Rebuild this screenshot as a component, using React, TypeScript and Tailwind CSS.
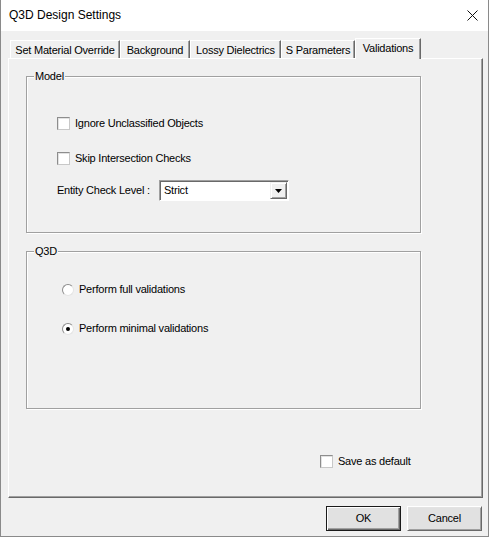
import React from 'react';

const ui = "font-['Liberation_Sans',sans-serif] text-[11px] leading-[13px] tracking-[-0.22px] text-black";

const tabs = [
  { label: 'Set Material Override', width: 'w-[110px]' },
  { label: 'Background', width: 'w-[70px]' },
  { label: 'Lossy Dielectrics', width: 'w-[91px]' },
  { label: 'S Parameters', width: 'w-[74px]' },
  { label: 'Validations', width: 'w-[66px]', active: true },
];

function CheckBox() {
  return (
    <span className="box-border h-[13px] w-[13px] shrink-0 border border-t-[#8d8d8d] border-l-[#8d8d8d] border-r-[#c8c8c8] border-b-[#c8c8c8] bg-white shadow-[inset_1px_1px_0_#e2e2e2]" />
  );
}

function Radio({ checked }: { checked?: boolean }) {
  return (
    <span className="box-border flex h-[12px] w-[12px] shrink-0 items-center justify-center rounded-full border border-t-[#8d8d8d] border-l-[#8d8d8d] border-r-[#e4e4e4] border-b-[#e4e4e4] bg-white">
      {checked && <span className="h-[4px] w-[4px] rounded-full bg-black" />}
    </span>
  );
}

function GroupBox({ title, className, children }: { title: string; className: string; children: React.ReactNode }) {
  return (
    <div className={`relative box-border w-[395px] border border-[#a0a0a0] shadow-[1px_1px_0_#ffffff,inset_1px_1px_0_#ffffff] ${className}`}>
      <span className="absolute left-[7px] top-[-7px] bg-[#f0f0f0] px-[1px]">{title}</span>
      {children}
    </div>
  );
}

export default function App() {
  return (
    <div className={`box-border flex h-[537px] w-[489px] flex-col border-x border-b border-[#8a8a8a] bg-[#f0f0f0] ${ui}`}>
      {/* Title bar */}
      <div className="flex h-[31px] shrink-0 items-center justify-between bg-white pl-[8px] pr-[10px]">
        <span className="font-['Liberation_Sans',sans-serif] text-[12px] tracking-normal text-black">Q3D Design Settings</span>
        <svg width="11" height="11" viewBox="0 0 11 11" className="mt-[-1px]">
          <path d="M0.5 0.5 L10.5 10.5 M10.5 0.5 L0.5 10.5" stroke="#111" strokeWidth="1" />
        </svg>
      </div>

      {/* Tabs */}
      <div className="ml-[9px] mt-[7px] flex h-[20px] items-end">
        {tabs.map((tab) =>
          tab.active ? (
            <div
              key={tab.label}
              className={`relative z-10 -mb-px box-border flex h-[21px] items-start justify-center border-l border-t border-r border-l-white border-t-white border-r-[#696969] bg-[#f0f0f0] pt-[3px] shadow-[inset_-1px_0_0_#a0a0a0] ${tab.width}`}
            >
              {tab.label}
            </div>
          ) : (
            <div
              key={tab.label}
              className={`box-border flex h-[18px] items-start justify-center border-l border-t border-r border-l-white border-t-white border-r-[#696969] pt-[3px] shadow-[inset_-1px_0_0_#a0a0a0] ${tab.width}`}
            >
              {tab.label}
            </div>
          )
        )}
      </div>

      {/* Tab page */}
      <div className="ml-[7px] box-border flex h-[440px] w-[475px] flex-col border border-t-white border-l-white border-r-[#696969] border-b-[#696969] shadow-[inset_-1px_-1px_0_#a0a0a0]">
        <GroupBox title="Model" className="ml-[17px] mt-[17px] h-[157px]">
          <div className="ml-[30px] mt-[40px] flex h-[13px] items-center gap-[5px]">
            <CheckBox />
            <span>Ignore Unclassified Objects</span>
          </div>
          <div className="ml-[30px] mt-[22px] flex h-[13px] items-center gap-[5px]">
            <CheckBox />
            <span>Skip Intersection Checks</span>
          </div>
          <div className="ml-[30px] mt-[15px] flex items-center">
            <span className="w-[102px]">Entity Check Level :</span>
            <div className="box-border flex h-[21px] w-[130px] items-center border border-t-[#a0a0a0] border-l-[#a0a0a0] border-r-white border-b-white bg-white shadow-[inset_1px_1px_0_#696969]">
              <span className="ml-[4px] flex-1">Strict</span>
              <span className="mr-[1px] box-border flex h-[17px] w-[17px] items-center justify-center border border-t-[#f0f0f0] border-l-[#f0f0f0] border-r-[#696969] border-b-[#696969] bg-[#f0f0f0] shadow-[inset_1px_1px_0_#ffffff,inset_-1px_-1px_0_#a0a0a0]">
                <svg width="7" height="4" viewBox="0 0 7 4">
                  <path d="M0 0 H7 L3.5 4 Z" fill="#000" />
                </svg>
              </span>
            </div>
          </div>
        </GroupBox>

        <GroupBox title="Q3D" className="ml-[17px] mt-[18px] h-[158px]">
          <div className="ml-[35px] mt-[31px] flex h-[13px] items-center gap-[5px]">
            <Radio />
            <span>Perform full validations</span>
          </div>
          <div className="ml-[35px] mt-[26px] flex h-[13px] items-center gap-[5px]">
            <Radio checked />
            <span>Perform minimal validations</span>
          </div>
        </GroupBox>

        <div className="ml-[311px] mt-[46px] flex h-[13px] items-center gap-[5px]">
          <CheckBox />
          <span>Save as default</span>
        </div>
      </div>

      {/* Buttons */}
      <div className="mr-[6px] mt-[8px] flex justify-end gap-[6px]">
        <button className="box-border flex h-[25px] w-[75px] items-center justify-center border border-[#1a1a1a] bg-[#e1e1e1] shadow-[inset_1px_1px_0_#ffffff,inset_-1px_-1px_0_#696969,inset_-2px_-2px_0_#a0a0a0]">
          OK
        </button>
        <button className="box-border flex h-[25px] w-[75px] items-center justify-center border border-t-[#ffffff] border-l-[#ffffff] border-r-[#696969] border-b-[#696969] bg-[#e1e1e1] shadow-[inset_1px_1px_0_#e3e3e3,inset_-1px_-1px_0_#a0a0a0]">
          Cancel
        </button>
      </div>
    </div>
  );
}
